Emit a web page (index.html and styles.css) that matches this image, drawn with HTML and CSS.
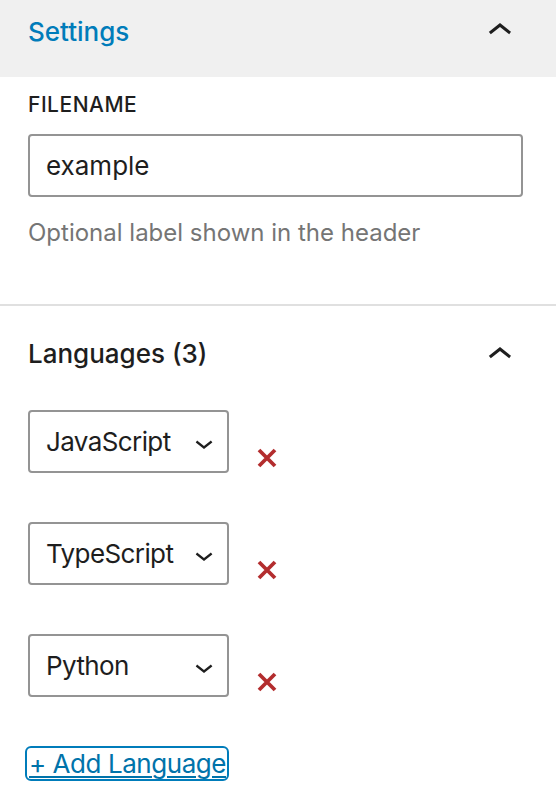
FILE: index.html
```html
<!DOCTYPE html>
<html lang="en">
<head>
<meta charset="utf-8">
<title>Settings</title>
<link rel="stylesheet" href="styles.css">
</head>
<body>
<div class="sidebar">
  <section class="panel panel-open">
    <div class="panel-header">
      <span class="panel-title active">Settings</span>
      <svg class="toggle-icon" viewBox="0 0 24 24" width="48" height="48" aria-hidden="true"><path d="M6.5 12.4L12 8l5.5 4.4-.9 1.2L12 10l-4.6 3.6-1-1.2z"/></svg>
    </div>
    <div class="panel-body">
      <label class="field-label" for="fn">FILENAME</label>
      <input id="fn" class="text-input" type="text" value="example">
      <p class="help">Optional label shown in the header</p>
    </div>
  </section>
  <section class="panel panel-languages">
    <div class="panel-header plain">
      <span class="panel-title">Languages (3)</span>
      <svg class="toggle-icon" viewBox="0 0 24 24" width="48" height="48" aria-hidden="true"><path d="M6.5 12.4L12 8l5.5 4.4-.9 1.2L12 10l-4.6 3.6-1-1.2z"/></svg>
    </div>
    <div class="lang-list">
      <div class="lang-row">
        <div class="select"><span>JavaScript</span><svg class="sel-icon" viewBox="0 0 24 24" width="36" height="36"><path d="M17.5 11.6L12 16l-5.5-4.4.9-1.2L12 14l4.6-3.6 1 1.2z"/></svg></div>
        <button class="remove" aria-label="Remove"><svg viewBox="0 0 20 20" width="20" height="20"><path d="M2 2L18 18M18 2L2 18"/></svg></button>
      </div>
      <div class="lang-row">
        <div class="select"><span>TypeScript</span><svg class="sel-icon" viewBox="0 0 24 24" width="36" height="36"><path d="M17.5 11.6L12 16l-5.5-4.4.9-1.2L12 14l4.6-3.6 1 1.2z"/></svg></div>
        <button class="remove" aria-label="Remove"><svg viewBox="0 0 20 20" width="20" height="20"><path d="M2 2L18 18M18 2L2 18"/></svg></button>
      </div>
      <div class="lang-row">
        <div class="select"><span>Python</span><svg class="sel-icon" viewBox="0 0 24 24" width="36" height="36"><path d="M17.5 11.6L12 16l-5.5-4.4.9-1.2L12 14l4.6-3.6 1 1.2z"/></svg></div>
        <button class="remove" aria-label="Remove"><svg viewBox="0 0 20 20" width="20" height="20"><path d="M2 2L18 18M18 2L2 18"/></svg></button>
      </div>
    </div>
    <a class="add-link" href="#">+ Add Language</a>
  </section>
</div>
</body>
</html>
```

FILE: styles.css
```css
* { box-sizing: border-box; }
html, body { margin: 0; padding: 0; background: #fff; }
body {
  font-family: Inter, "Noto Sans", "Liberation Sans", sans-serif;
  color: #1e1e1e;
  width: 556px;
}
.sidebar { width: 556px; }

.panel-header {
  height: 77px;
  background: #f0f0f0;
  display: flex;
  justify-content: space-between;
  align-items: flex-start;
  padding: 0 32px 0 28px;
}
.panel-title {
  font-size: 26px;
  font-weight: 500;
  line-height: 32px;
  margin-top: 16px;
}
.panel-title.active { color: #007cba; }
.toggle-icon {
  fill: #1e1e1e;
  margin-top: 7px;
}

.panel-body {
  padding: 17px 33px 0 28px;
  height: 229px;
  border-bottom: 2px solid #e0e0e0;
}
.field-label {
  display: block;
  font-size: 21px;
  font-weight: 500;
  line-height: 22px;
  letter-spacing: 0.5px;
  color: #1e1e1e;
}
.text-input {
  display: block;
  width: 495px;
  height: 63px;
  margin-top: 18px;
  border: 2px solid #949494;
  border-radius: 4px;
  padding: 0 16px;
  font-family: inherit;
  font-size: 26px;
  color: #1e1e1e;
  background: #fff;
  outline: none;
}
.help {
  margin: 20px 0 0;
  font-size: 24px;
  line-height: 32px;
  color: #757575;
}

.panel-header.plain {
  background: #fff;
  height: auto;
  padding-top: 0;
}
.panel-languages .panel-header { height: 104px; }
.panel-languages .panel-title { margin-top: 32px; }
.panel-languages .toggle-icon { margin-top: 25px; }

.lang-list {
  display: flex;
  flex-direction: column;
  gap: 49px;
  padding: 0 28px;
}
.lang-row {
  display: flex;
  align-items: flex-start;
  gap: 28px;
}
.select {
  width: 201px;
  height: 63px;
  border: 2px solid #949494;
  border-radius: 4px;
  display: flex;
  align-items: center;
  justify-content: space-between;
  padding: 0 5px 0 16px;
  font-size: 26px;
  letter-spacing: -0.6px;
  color: #1e1e1e;
}
.sel-icon { fill: #1e1e1e; flex: none; margin-top: 2px; }
.remove {
  border: 0;
  background: none;
  padding: 0;
  margin-top: 38px;
  width: 20px;
  height: 20px;
  cursor: pointer;
}
.remove svg { display: block; stroke: #b32d2e; stroke-width: 3.8; fill: none; }

.add-link {
  display: inline-block;
  margin: 49px 0 0 25px;
  padding: 0 1px 0 2px;
  border: 2px solid #007cba;
  border-radius: 6px;
  font-size: 26px;
  line-height: 31px;
  letter-spacing: -0.45px;
  color: #0073aa;
  text-decoration: underline;
  text-decoration-thickness: 2px;
  text-underline-offset: 3px;
}
```
